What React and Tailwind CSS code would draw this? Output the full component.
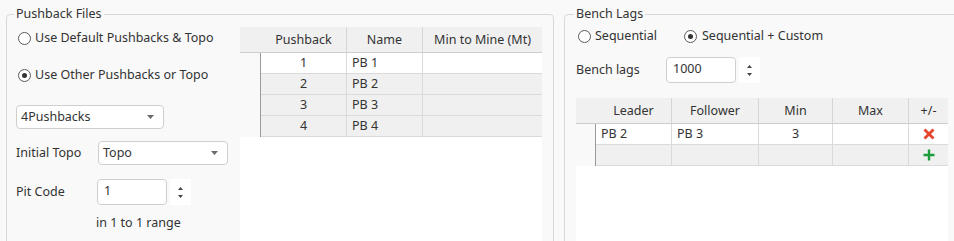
import React from "react";

const font = "font-['Noto_Sans','Open_Sans',sans-serif]";

function Radio({ checked }) {
  return (
    <span className="w-[13px] h-[13px] rounded-full border border-[#5a5a5a] bg-white flex items-center justify-center shrink-0">
      {checked && <span className="w-[5px] h-[5px] rounded-full bg-[#333]" />}
    </span>
  );
}

function Caret() {
  return (
    <svg width="7" height="4" viewBox="0 0 7 4" className="shrink-0">
      <path d="M0 0 H7 L3.5 4 Z" fill="#6a6a6a" />
    </svg>
  );
}

function Combo({ value, w }) {
  return (
    <div className={`${w} h-[24px] bg-white border border-[#cfcfcf] rounded-[4px] flex items-center pl-[4px] pr-[9px] justify-between`}>
      <span>{value}</span>
      <Caret />
    </div>
  );
}

function Spin({ value, w }) {
  return (
    <div className="flex items-center gap-[3px]">
      <div className={`${w} h-[26px] bg-white border border-[#cfcfcf] rounded-[4px] flex items-center pl-[6px] pb-[3px]`}>
        {value}
      </div>
      <div className="w-[21px] h-[26px] bg-white flex flex-col items-center justify-center gap-[5px]">
        <svg width="5" height="3" viewBox="0 0 5 3"><path d="M0 3 L2.5 0 L5 3 Z" fill="#444" /></svg>
        <svg width="5" height="3" viewBox="0 0 5 3"><path d="M0 0 L5 0 L2.5 3 Z" fill="#444" /></svg>
      </div>
    </div>
  );
}

function Grid({ cols, headers, rows, width, align }) {
  const tpl = cols.map((c) => `${c}px`).join(" ");
  return (
    <div className="bg-white h-[240px]" style={{ width }}>
      <div className="grid h-[26px] bg-[#f0f0f0] border-b border-[#cdcdcd]" style={{ gridTemplateColumns: tpl }}>
        <div />
        {headers.map((h, i) => (
          <div
            key={i}
            className={`flex items-center justify-center ${i < headers.length - 1 ? "border-r border-[#d6d6d6]" : ""}`}
          >
            {h}
          </div>
        ))}
      </div>
      {rows.map((r, ri) => (
        <div
          key={ri}
          className={`grid h-[21px] ${ri === 0 ? "bg-white" : "bg-[#f0f0f0]"}`}
          style={{ gridTemplateColumns: tpl }}
        >
          <div className="bg-[#f9f9f9] border-r border-[#9a9a9a]" />
          {r.map((c, ci) => (
            <div
              key={ci}
              className={`flex items-center border-b border-[#dadada] ${ci < r.length - 1 ? "border-r" : ""} ${
                align[ci] === "c" ? "justify-center" : "justify-start pl-[5px]"
              }`}
            >
              {c}
            </div>
          ))}
        </div>
      ))}
    </div>
  );
}

function XIcon() {
  return (
    <svg width="12" height="12" viewBox="0 0 12 12">
      <path d="M1.5 1.5 L10.5 10.5 M10.5 1.5 L1.5 10.5" stroke="#e5432c" strokeWidth="2.8" strokeLinecap="butt" />
    </svg>
  );
}

function PlusIcon() {
  return (
    <svg width="12" height="12" viewBox="0 0 12 12">
      <path d="M6 0.5 V11.5 M0.5 6 H11.5" stroke="#1e9b3a" strokeWidth="2.4" />
    </svg>
  );
}

export default function App() {
  return (
    <div className={`w-[954px] h-[241px] overflow-hidden bg-[#f9f9f9] text-[12.5px] leading-[16px] text-[#333] ${font} flex pl-[6px] pt-[14px] gap-[10px]`}>
      {/* Left group */}
      <div className="relative w-[548px] h-[260px] shrink-0 border border-[#d8d8d8] rounded-[4px] flex">
        <span className="absolute left-[7px] top-[-9px] px-[2px] bg-[#f9f9f9]">Pushback Files</span>
        <div className="w-[233px] shrink-0 flex flex-col">
          <div className="mt-[13px] h-[20px] flex items-center pl-[11px] gap-[4px]">
            <Radio />
            <span>Use Default Pushbacks &amp; Topo</span>
          </div>
          <div className="mt-[17px] h-[20px] flex items-center pl-[11px] gap-[4px]">
            <Radio checked />
            <span>Use Other Pushbacks or Topo</span>
          </div>
          <div className="mt-[20px] pl-[9px]">
            <Combo value="4Pushbacks" w="w-[148px]" />
          </div>
          <div className="mt-[12px] pl-[9px] flex items-center">
            <span className="w-[82px]">Initial Topo</span>
            <Combo value="Topo" w="w-[130px]" />
          </div>
          <div className="mt-[14px] pl-[9px] flex items-center">
            <span className="w-[81px]">Pit Code</span>
            <Spin value="1" w="w-[70px]" />
          </div>
          <div className="mt-[10px] pl-[89px]">in 1 to 1 range</div>
        </div>
        <div className="mt-[12px]">
          <Grid
            width={302}
            cols={[21, 86, 76, 119]}
            headers={["Pushback", "Name", "Min to Mine (Mt)"]}
            align={["c", "l", "l"]}
            rows={[
              ["1", "PB 1", ""],
              ["2", "PB 2", ""],
              ["3", "PB 3", ""],
              ["4", "PB 4", ""],
            ]}
          />
        </div>
      </div>

      {/* Right group */}
      <div className="relative w-[420px] h-[260px] shrink-0 border border-[#d8d8d8] rounded-[4px] flex flex-col pl-[11px]">
        <span className="absolute left-[9px] top-[-9px] px-[2px] bg-[#f9f9f9]">Bench Lags</span>
        <div className="mt-[13px] h-[20px] flex items-center">
          <span className="ml-[2px]"><Radio /></span>
          <span className="ml-[4px] w-[89px]">Sequential</span>
          <Radio checked />
          <span className="ml-[5px]">Sequential + Custom</span>
        </div>
        <div className="mt-[13px] flex items-center">
          <span className="w-[90px]">Bench lags</span>
          <Spin value="1000" w="w-[70px]" />
        </div>
        <div className="mt-[15px]">
          <Grid
            width={372}
            cols={[20, 76, 87, 74, 76, 39]}
            headers={["Leader", "Follower", "Min", "Max", "+/-"]}
            align={["l", "l", "c", "l", "c"]}
            rows={[
              ["PB 2", "PB 3", "3", "", <XIcon key="x" />],
              ["", "", "", "", <PlusIcon key="p" />],
            ]}
          />
        </div>
      </div>
    </div>
  );
}
